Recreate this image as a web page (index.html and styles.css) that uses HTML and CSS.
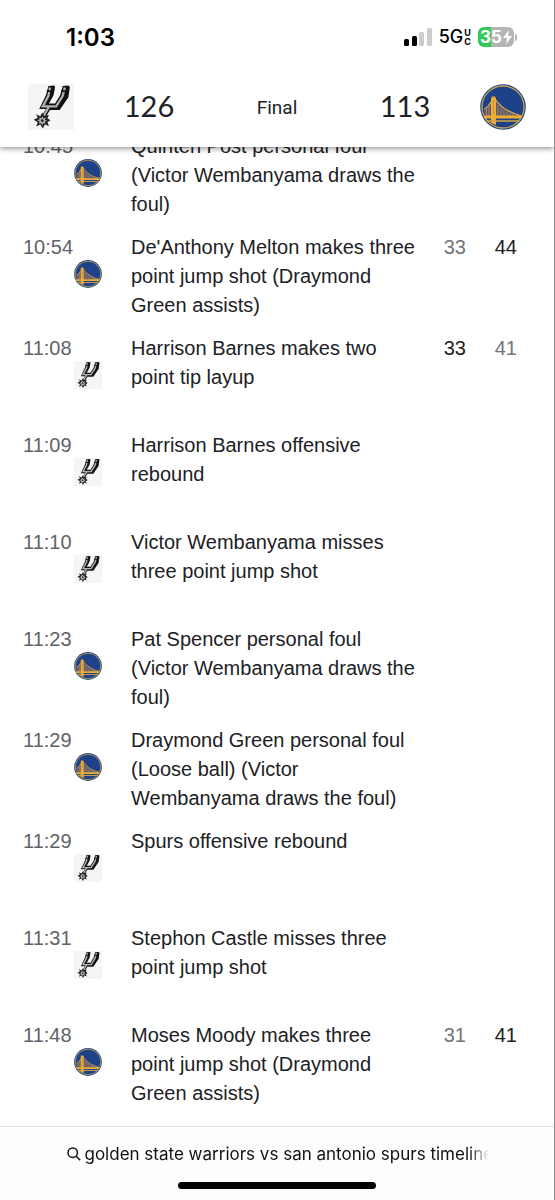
FILE: index.html
```html
<!DOCTYPE html>
<html lang="en">
<head>
<meta charset="utf-8">
<meta name="viewport" content="width=device-width, initial-scale=1">
<title>Spurs vs Warriors play-by-play</title>
<link rel="stylesheet" href="styles.css">
</head>
<body>
<svg class="sprite" aria-hidden="true">
  <symbol id="spurs" viewBox="0 0 45 45">
    <rect width="45" height="45" fill="#f5f5f5"/>
    <path d="M20 2 25.500 1.500 26.500 3 25 11 20.500 19 26.500 19 31.500 11 34 2 39.500 1.500 41 3 39.500 13 31 25.500 21.500 25.500 17 33 13.500 31 17.500 24.500 11 24.500 17.500 11Z" fill="#111"/>
    <path d="M21.500 3.500 20 11.500 14.500 22H27.500L34 11.500 36 3.500M20.500 22 15.500 31" fill="none" stroke="#aeb3b6" stroke-width="2.200"/>
    <path d="M18.500 6.500 23 7.500M32.500 6.500 37.500 7.500" stroke="#111" stroke-width="1.600"/>
    <path d="M14 28 16 31.500 20.500 30 19 33.500 22 35.500 19 37.500 20.500 41 16.500 39.500 14.500 43.500 12 39.500 8 41.500 9.500 37.500 5.500 35 9.500 33 8 29.500 12 31.500Z" fill="#222"/>
    <path d="M14 31.500 15 33.500 17.500 33 16.500 35 18.500 36 16.500 37 17 39 15 38.500 14 40.500 13 38.500 10.500 39 11.500 37 9 35.500 11.500 34.500 11 32.500 13 33.500Z" fill="#a9aeb1"/>
    <circle cx="14" cy="35.800" r="1.300" fill="#222"/>
  </symbol>
  <symbol id="warriors" viewBox="0 0 46 46">
    <circle cx="23" cy="23" r="22.800" fill="#234783"/>
    <circle cx="23" cy="23" r="21" fill="#1d428a" stroke="#c7a14e" stroke-width="1.300"/>
    <path d="M14 15Q22 26 41 32V33H4V25Q10 22 12 15Z" fill="#59597a"/>
    <path d="M18 21V32M21 24V32M24 26V32M27 28V32M30 29V32M33 30V32M9 23V32M6.500 25V32" stroke="#c6903b" stroke-width=".8"/>
    <path d="M15 15Q23 27 41.500 32M11 18Q9 22.500 4.500 25" fill="none" stroke="#eeb041" stroke-width="1.200"/>
    <path d="M11 14.500 12 12.500H15L16 14.500V41L11 39Z" fill="#f0ad35"/>
    <path d="M3.500 31.500H42L41 34.500H4.500Z" fill="#f0ad35"/>
    <path d="M6.500 37H39.500" stroke="#d9a642" stroke-width="1.500"/>
    <path d="M13.500 16V30" stroke="#bd872b" stroke-width=".8"/>
  </symbol>
</svg>

<div class="screen">
  <header class="top">
    <div class="status">
      <time class="clock">1:03</time>
      <div class="indicators">
        <svg class="signal" viewBox="0 0 28 18" role="img" aria-label="Signal">
          <rect x="0" y="11" width="5" height="7" rx="1.500"/>
          <rect x="8" y="8" width="5" height="10" rx="1.500"/>
          <rect x="15" y="4" width="5" height="14" rx="1.500" fill="#ccc"/>
          <rect x="23" y="0" width="5" height="18" rx="1.500" fill="#ccc"/>
        </svg>
        <span class="network">5G</span>
        <span class="band"><span>U</span><span>C</span></span>
        <span class="battery"><span>35</span><svg class="bolt" viewBox="0 0 9 14" aria-hidden="true"><path d="M6 0 0 8H4L3 14 9 6H5Z" fill="#fff"/></svg></span>
        <span class="battery-cap"></span>
      </div>
    </div>
    <div class="scoreboard">
      <svg class="team" role="img" aria-label="Spurs"><use href="#spurs"/></svg>
      <span class="points">126</span>
      <span class="state">Final</span>
      <span class="points">113</span>
      <svg class="team" role="img" aria-label="Warriors"><use href="#warriors"/></svg>
    </div>
  </header>

  <main class="feed">
    <ol class="plays">
      <li class="play"><time class="at">10:45</time><svg class="badge"><use href="#warriors"/></svg><p class="what">Quinten Post personal foul (Victor Wembanyama draws the foul)</p></li>
      <li class="play"><time class="at">10:54</time><svg class="badge"><use href="#warriors"/></svg><p class="what">De'Anthony Melton makes three point jump shot (Draymond Green assists)</p><span class="tally">33</span><span class="tally scored">44</span></li>
      <li class="play"><time class="at">11:08</time><svg class="badge"><use href="#spurs"/></svg><p class="what">Harrison Barnes makes two point tip layup</p><span class="tally scored">33</span><span class="tally">41</span></li>
      <li class="play"><time class="at">11:09</time><svg class="badge"><use href="#spurs"/></svg><p class="what">Harrison Barnes offensive rebound</p></li>
      <li class="play"><time class="at">11:10</time><svg class="badge"><use href="#spurs"/></svg><p class="what">Victor Wembanyama misses three point jump shot</p></li>
      <li class="play"><time class="at">11:23</time><svg class="badge"><use href="#warriors"/></svg><p class="what">Pat Spencer personal foul (Victor Wembanyama draws the foul)</p></li>
      <li class="play"><time class="at">11:29</time><svg class="badge"><use href="#warriors"/></svg><p class="what">Draymond Green personal foul (Loose ball) (Victor Wembanyama draws the foul)</p></li>
      <li class="play"><time class="at">11:29</time><svg class="badge"><use href="#spurs"/></svg><p class="what">Spurs offensive rebound</p></li>
      <li class="play"><time class="at">11:31</time><svg class="badge"><use href="#spurs"/></svg><p class="what">Stephon Castle misses three point jump shot</p></li>
      <li class="play"><time class="at">11:48</time><svg class="badge"><use href="#warriors"/></svg><p class="what">Moses Moody makes three point jump shot (Draymond Green assists)</p><span class="tally">31</span><span class="tally scored">41</span></li>
    </ol>
  </main>

  <footer class="bottom">
    <button class="search" type="button">
      <svg class="lens" viewBox="0 0 14 14" aria-hidden="true"><circle cx="5.700" cy="5.700" r="4.700"/><path d="M9.200 9.200 13.200 13.200"/></svg>
      <span class="query">golden state warriors vs san antonio spurs timeline</span>
    </button>
    <span class="home-bar"></span>
  </footer>
</div>
</body>
</html>
```
FILE: styles.css
```css
* { box-sizing: border-box; }

body {
  margin: 0;
  background: #fff;
  color: #202124;
  font-family: "Liberation Sans", Arial, sans-serif;
  font-size: 20px;
}

.sprite { position: absolute; width: 0; height: 0; }

.screen {
  display: flex;
  flex-direction: column;
  height: 100vh;
  border-right: 1px solid #8e8e8e;
}

.top {
  position: relative;
  flex: none;
  padding-bottom: 17px;
  background: #fff;
  box-shadow: 0 1px 6px rgba(0, 0, 0, .5);
  clip-path: inset(0 0 -12px 0);
}

.status {
  display: flex;
  justify-content: space-between;
  align-items: center;
  height: 74px;
  padding: 0 37px 0 66px;
  color: #000;
  font-family: Inter, sans-serif;
}

.clock { font-size: 24px; font-weight: 600; }

.indicators { display: flex; align-items: center; }

.signal { width: 28px; height: 18px; margin-right: 7px; }

.network { font-size: 18px; font-weight: 500; line-height: 20px; }

.band {
  display: flex;
  flex-direction: column;
  margin: 0 7px 0 1px;
  font-size: 9px;
  font-weight: 700;
  line-height: 9px;
}

.battery {
  display: flex;
  align-items: center;
  justify-content: center;
  gap: 1px;
  width: 36px;
  height: 20px;
  border-radius: 6px;
  background: linear-gradient(90deg, #34c759 35%, #b5b5b5 35%);
  color: #fff;
  font-size: 17px;
  font-weight: 700;
}

.bolt { width: 9px; height: 14px; }

.battery-cap {
  width: 2px;
  height: 7px;
  margin-left: 1px;
  border-radius: 0 2px 2px 0;
  background: #b5b5b5;
}

.scoreboard {
  display: grid;
  grid-template-columns: 46px 1fr 1fr 1fr 46px;
  column-gap: 22px;
  align-items: center;
  justify-items: center;
  height: 46px;
  margin-top: 10px;
  padding: 0 28px;
}

.team { display: block; width: 46px; height: 46px; }

.points { font-family: Lato, sans-serif; font-size: 29px; line-height: 34px; padding-bottom: 2px; }

.state { font-family: Roboto, sans-serif; font-size: 19px; }

.feed { flex: 1; min-height: 0; overflow: hidden; }

.plays { margin: -15px 0 0; padding: 0; list-style: none; }

.play {
  display: grid;
  grid-template-columns: 51px 57px minmax(0, 1fr) 49px 51px;
  align-items: start;
  min-height: 97px;
  padding: 0 37px 14px 23px;
  line-height: 29px;
}

.at { color: #5f6368; }

.badge { display: block; width: 28px; height: 28px; margin-top: 27px; }

.what { margin: 0; }

.tally { color: #70757a; text-align: right; }

.scored { color: #202124; }

.bottom {
  display: flex;
  flex: none;
  flex-direction: column;
  align-items: center;
  height: 74px;
  padding-top: 16px;
  border-top: 1px solid #dcdcdc;
  background: #fdfdfd;
}

.search {
  display: flex;
  align-items: center;
  gap: 3px;
  width: 76%;
  margin-left: 2px;
  padding: 0;
  border: 0;
  background: none;
  color: #111;
  font-family: Inter, sans-serif;
  font-size: 17px;
  line-height: 22px;
}

.lens {
  flex: none;
  width: 14px;
  height: 14px;
  fill: none;
  stroke: #111;
  stroke-width: 1.5px;
}

.query {
  overflow: hidden;
  white-space: nowrap;
  -webkit-mask-image: linear-gradient(90deg, #000 95%, transparent);
  mask-image: linear-gradient(90deg, #000 95%, transparent);
}

.home-bar {
  width: 198px;
  height: 7px;
  margin-top: 17px;
  border-radius: 4px;
  background: #000;
}
```
